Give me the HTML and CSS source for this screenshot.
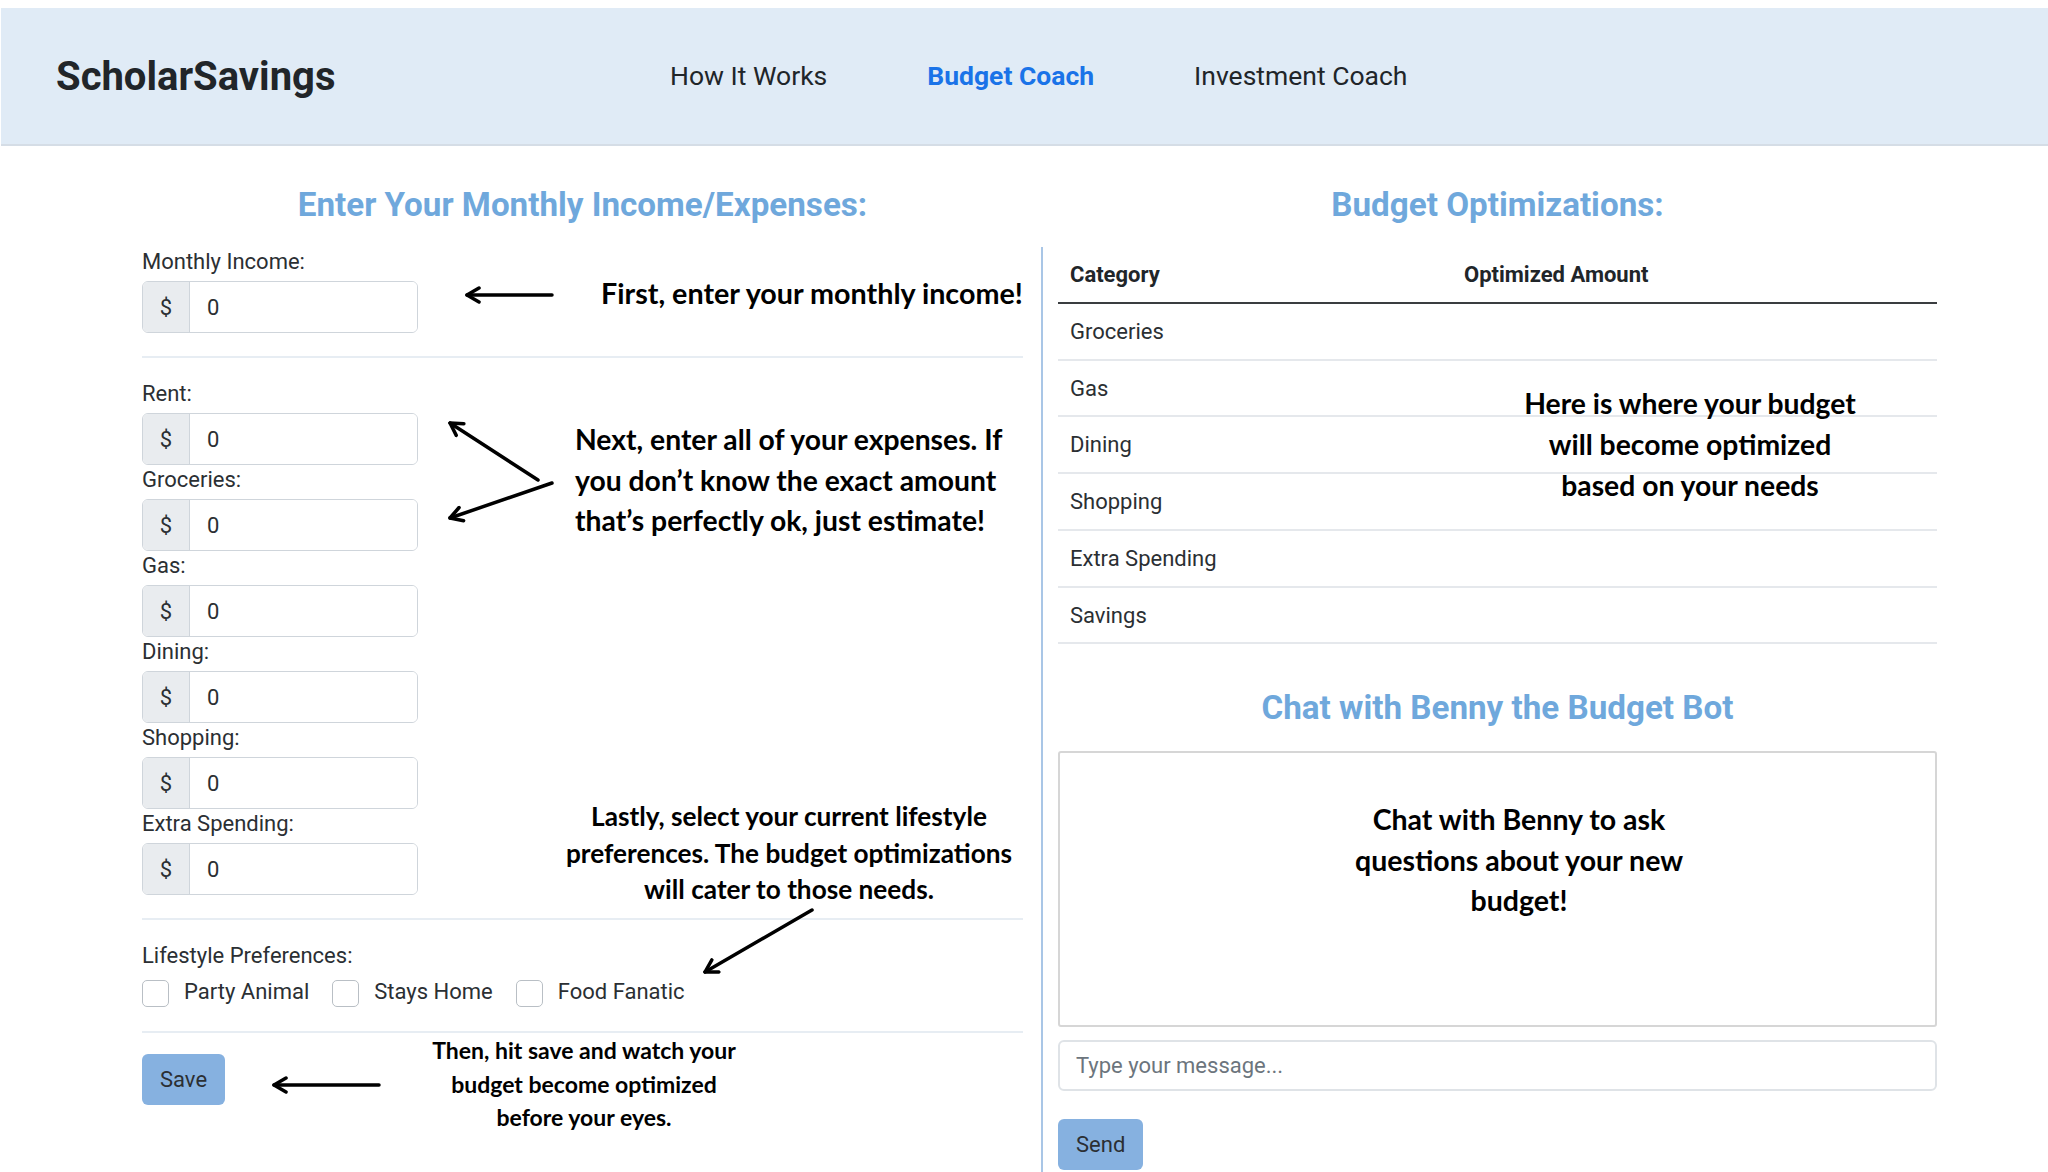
FILE: index.html
```html
<!DOCTYPE html>
<html lang="en">
<head>
<meta charset="utf-8">
<title>ScholarSavings - Budget Coach</title>
<link rel="stylesheet" href="styles.css">
</head>
<body>
<header class="topbar">
  <div class="logo">ScholarSavings</div>
  <nav class="nav">
    <a href="#">How It Works</a>
    <a href="#" class="active">Budget Coach</a>
    <a href="#">Investment Coach</a>
  </nav>
</header>

<main class="main">
  <section class="col left">
    <h2 class="title">Enter Your Monthly Income/Expenses:</h2>
    <div class="field">
      <label class="field-label">Monthly Income:</label>
      <div class="input-group"><span class="addon">$</span><input class="input" type="text" value="0"></div>
    </div>
    <hr class="divider">
    <div class="field">
      <label class="field-label">Rent:</label>
      <div class="input-group"><span class="addon">$</span><input class="input" type="text" value="0"></div>
    </div>
    <div class="field">
      <label class="field-label">Groceries:</label>
      <div class="input-group"><span class="addon">$</span><input class="input" type="text" value="0"></div>
    </div>
    <div class="field">
      <label class="field-label">Gas:</label>
      <div class="input-group"><span class="addon">$</span><input class="input" type="text" value="0"></div>
    </div>
    <div class="field">
      <label class="field-label">Dining:</label>
      <div class="input-group"><span class="addon">$</span><input class="input" type="text" value="0"></div>
    </div>
    <div class="field">
      <label class="field-label">Shopping:</label>
      <div class="input-group"><span class="addon">$</span><input class="input" type="text" value="0"></div>
    </div>
    <div class="field">
      <label class="field-label">Extra Spending:</label>
      <div class="input-group"><span class="addon">$</span><input class="input" type="text" value="0"></div>
    </div>
    <hr class="divider">
    <div class="field">
      <label class="field-label">Lifestyle Preferences:</label>
      <div class="checks">
        <label class="check"><input type="checkbox" class="box"><span>Party Animal</span></label>
        <label class="check"><input type="checkbox" class="box"><span>Stays Home</span></label>
        <label class="check"><input type="checkbox" class="box"><span>Food Fanatic</span></label>
      </div>
    </div>
    <hr class="divider">
    <button class="btn">Save</button>
  </section>

  <section class="col right">
    <h2 class="title">Budget Optimizations:</h2>
    <div class="panel">
      <table class="table">
        <thead>
          <tr><th class="c1">Category</th><th>Optimized Amount</th></tr>
        </thead>
        <tbody>
          <tr><td>Groceries</td><td></td></tr>
          <tr><td>Gas</td><td></td></tr>
          <tr><td>Dining</td><td></td></tr>
          <tr><td>Shopping</td><td></td></tr>
          <tr><td>Extra Spending</td><td></td></tr>
          <tr><td>Savings</td><td></td></tr>
        </tbody>
      </table>
      <h2 class="title chat-title">Chat with Benny the Budget Bot</h2>
      <div class="chat-box"></div>
      <input class="msg" type="text" placeholder="Type your message...">
      <button class="btn send">Send</button>
    </div>
  </section>
</main>

<div class="note n1">First, enter your monthly income!</div>
<div class="note n2">Next, enter all of your expenses. If<br>you don’t know the exact amount<br>that’s perfectly ok, just estimate!</div>
<div class="note n3">Lastly, select your current lifestyle<br>preferences. The budget optimizations<br>will cater to those needs.</div>
<div class="note n4">Then, hit save and watch your<br>budget become optimized<br>before your eyes.</div>
<div class="note n5">Here is where your budget<br>will become optimized<br>based on your needs</div>
<div class="note n6">Chat with Benny to ask<br>questions about your new<br>budget!</div>

<svg class="arrows" width="2048" height="1172" viewBox="0 0 2048 1172" aria-hidden="true">
  <defs>
    <marker id="ah" viewBox="0 0 16 18" refX="14" refY="9" markerWidth="16" markerHeight="18" markerUnits="userSpaceOnUse" orient="auto">
      <path d="M2,2 L14,9 L2,16" fill="none" stroke="#000" stroke-width="3.5" stroke-linecap="round" stroke-linejoin="round"/>
    </marker>
  </defs>
  <g stroke="#000" stroke-width="3.5" fill="none" stroke-linecap="round">
    <line x1="552" y1="295" x2="467" y2="295" marker-end="url(#ah)"/>
    <line x1="538" y1="480" x2="450" y2="423" marker-end="url(#ah)"/>
    <line x1="552" y1="483" x2="450" y2="518" marker-end="url(#ah)"/>
    <line x1="812" y1="910" x2="705" y2="972" marker-end="url(#ah)"/>
    <line x1="379" y1="1085" x2="274" y2="1085" marker-end="url(#ah)"/>
  </g>
</svg>
</body>
</html>
```

FILE: styles.css
```css
* { box-sizing: border-box; }

html, body {
  margin: 0;
  padding: 0;
  overflow: hidden;
}

body {
  position: relative;
  width: 2048px;
  height: 1172px;
  padding-top: 8px;
  font-family: Roboto, "Liberation Sans", Arial, sans-serif;
  color: #212529;
  background: #ffffff;
}

/* ---------- top bar ---------- */
.topbar {
  margin-left: 1px;
  height: 138px;
  display: flex;
  align-items: center;
  padding-left: 55px;
  background: #e0ebf6;
  border-bottom: 2px solid #d5dde6;
}

.logo {
  width: 614px;
  font-size: 40px;
  font-weight: 700;
  color: #212529;
}

.nav {
  display: flex;
  gap: 100px;
  font-size: 26.5px;
  margin-top: -2px;
}

.nav a {
  color: #212529;
  text-decoration: none;
}

.nav a.active {
  color: #1a73e8;
  font-weight: 700;
}

/* ---------- main layout ---------- */
.main {
  display: grid;
  grid-template-columns: 881px 896px;
  column-gap: 18px;
  padding-left: 142px;
}

.title {
  margin: 40px 0 23px;
  font-size: 33.2px;
  line-height: 38px;
  font-weight: 700;
  color: #6fa8dc;
  text-align: center;
}

.right > .title {
  padding-left: 17px;
}

.panel {
  border-left: 2px solid #a9c6e6;
  padding-left: 15px;
  padding-bottom: 40px;
}

/* ---------- form ---------- */
.field-label {
  display: block;
  font-size: 22px;
  line-height: 30px;
  margin-bottom: 4px;
  color: #2b2f33;
}

.input-group {
  display: flex;
  width: 276px;
  height: 52px;
  border: 1px solid #cfd5db;
  border-radius: 6px;
  overflow: hidden;
}

.addon {
  width: 47px;
  display: flex;
  align-items: center;
  justify-content: center;
  font-size: 22px;
  background: #e9ecef;
  border-right: 1px solid #cfd5db;
  color: #2b2f33;
}

.input {
  flex: 1;
  min-width: 0;
  border: 0;
  outline: none;
  padding: 0 0 0 17px;
  font-family: inherit;
  font-size: 22px;
  color: #2b2f33;
  background: #fff;
}

.divider {
  border: 0;
  border-top: 2px solid #e7edf3;
  margin: 23px 0 21px;
}

.checks {
  display: flex;
  align-items: center;
  height: 33px;
}

.check {
  display: flex;
  align-items: center;
  margin-right: 23px;
  font-size: 22px;
  color: #2b2f33;
}

.box {
  appearance: none;
  -webkit-appearance: none;
  width: 27px;
  height: 27px;
  margin: 3px 15px 0 0;
  border: 1px solid #b9bfc5;
  border-radius: 5px;
  background: #fff;
}

.btn {
  display: block;
  height: 51px;
  padding: 0 18px;
  border: 0;
  border-radius: 6px;
  background: #86b1e0;
  color: #2b2f33;
  font-family: inherit;
  font-size: 22px;
}

/* ---------- table ---------- */
.table {
  width: 879px;
  border-collapse: collapse;
  font-size: 22px;
}

.table th {
  text-align: left;
  font-weight: 700;
  padding: 12px 12px 11px;
  line-height: 32px;
  border-bottom: 2px solid #3a3d40;
}

.table th.c1 {
  width: 394px;
}

.table td {
  padding: 12px 12px 10px;
  line-height: 32.7px;
  border-bottom: 2px solid #e5e8ec;
  color: #2b2f33;
}

/* ---------- chat ---------- */
.chat-title {
  margin: 45px 0 24px;
}

.chat-box {
  width: 879px;
  height: 276px;
  border: 2px solid #d6d6d6;
  border-radius: 3px;
}

.msg {
  display: block;
  width: 879px;
  height: 51px;
  margin-top: 13px;
  padding: 0 16px;
  border: 2px solid #dfe3e7;
  border-radius: 6px;
  outline: none;
  font-family: inherit;
  font-size: 22px;
  color: #2b2f33;
}

.msg::placeholder {
  color: #6c757d;
}

.send {
  margin-top: 28px;
}

/* ---------- annotation overlays ---------- */
.note {
  position: absolute;
  font-family: Lato, "Open Sans", sans-serif;
  font-weight: 700;
  color: #000;
  white-space: nowrap;
}

.n1 { left: 601px; top: 273px; font-size: 28.7px; line-height: 40px; }
.n2 { left: 575px; top: 419px; font-size: 28.3px; line-height: 40.5px; }
.n3 { left: 539px; top: 798px; width: 500px; text-align: center; font-size: 26.2px; line-height: 36.5px; }
.n4 { left: 384px; top: 1034px; width: 400px; text-align: center; font-size: 23px; line-height: 33.5px; }
.n5 { left: 1440px; top: 383px; width: 500px; text-align: center; font-size: 28.3px; line-height: 41px; }
.n6 { left: 1269px; top: 799px; width: 500px; text-align: center; font-size: 28.5px; line-height: 40.5px; }

.arrows {
  position: absolute;
  left: 0;
  top: 0;
  pointer-events: none;
}
```
